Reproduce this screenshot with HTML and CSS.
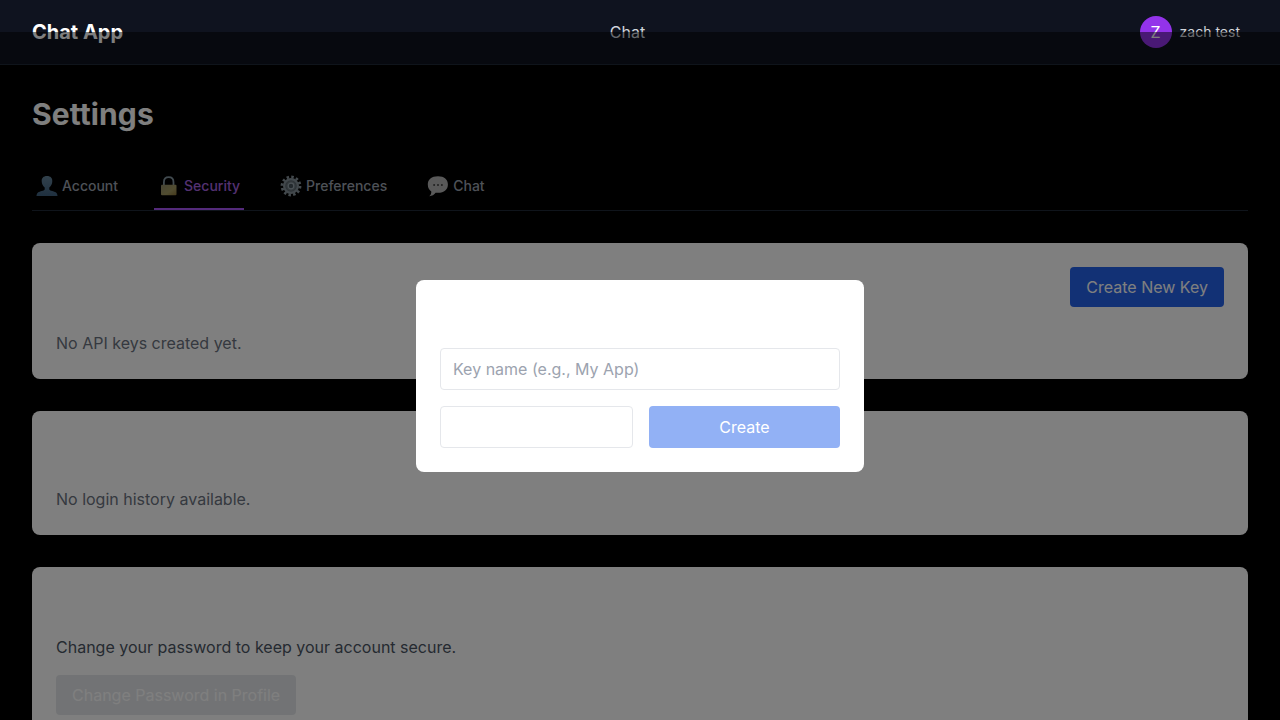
FILE: index.html
```html
<!DOCTYPE html>
<html lang="en">
<head>
<meta charset="utf-8">
<title>Chat App</title>
<link rel="stylesheet" href="styles.css">
</head>
<body>
<header class="topbar">
  <div class="brand">Chat App</div>
  <nav class="nav">Chat</nav>
  <div class="user"><span class="avatar">Z</span><span class="username">zach test</span></div>
</header>
<main class="page">
  <h1 class="title">Settings</h1>
  <div class="tabs">
    <div class="tab">
      <svg class="icon" viewBox="0 0 22 22"><defs><linearGradient id="person" x1="0" y1="0" x2="0" y2="1"><stop offset="0" stop-color="#648298"/><stop offset="1" stop-color="#3f6180"/></linearGradient></defs><path fill="url(#person)" d="M11 1C7.400 1 5.500 3.200 5.700 6.200c.1 2.600 1.100 4.900 3 6.200v2c-.7 1.500-4.700 1.400-6.700 3.200C.9 18.600.5 20 .5 21h21c0-1-.4-2.400-1.500-3.400-2-1.800-6-1.700-6.700-3.200v-2c1.900-1.300 2.900-3.600 3-6.200C16.500 3.200 14.600 1 11 1z"/></svg>
      <span>Account</span>
    </div>
    <div class="tab tab-active">
      <svg class="icon" viewBox="0 0 22 22"><defs><linearGradient id="lock" x1="0" y1="0" x2="1" y2="1"><stop offset="0" stop-color="#8f8a68"/><stop offset=".6" stop-color="#a39a62"/><stop offset="1" stop-color="#8a7438"/></linearGradient></defs><path fill="none" stroke="#82949e" stroke-width="1.800" d="M5.900 11V7.200C5.900 4 8 2.200 10.700 2.200s4.800 1.800 4.800 5V11"/><rect x="3" y="9.800" width="15.500" height="10.500" rx="1" fill="url(#lock)"/></svg>
      <span>Security</span>
    </div>
    <div class="tab">
      <svg class="icon" viewBox="0 0 22 22"><circle cx="11" cy="11" r="9" fill="none" stroke="#87939a" stroke-width="2.800" stroke-dasharray="2.450 2.262"/><circle cx="11" cy="11" r="6.900" fill="#5b666d" stroke="#849098" stroke-width="2.200"/><circle cx="11" cy="11" r="4.700" fill="#69757c"/><circle cx="11" cy="11" r="2.800" fill="#46535a" stroke="#98a5ad" stroke-width="1.200"/></svg>
      <span>Preferences</span>
    </div>
    <div class="tab">
      <svg class="icon" viewBox="0 0 22 22"><path fill="#b3b3b3" d="M11 1.200C4.500 1.200.8 4.300.8 9.500c0 3.500 1.500 5.700 3.500 7 .1 2-.6 3.600-2 4.700 2.700-.1 5-1.400 6.300-3.400h2.400c6.200 0 9.900-3.200 9.900-8.300S17.200 1.200 11 1.200z"/><g fill="#404040"><circle cx="7.100" cy="10" r="1"/><circle cx="11" cy="10" r="1"/><circle cx="14.900" cy="10" r="1"/></g></svg>
      <span>Chat</span>
    </div>
  </div>
  <section class="card">
    <div class="card-head"><button class="btn btn-primary">Create New Key</button></div>
    <p class="empty">No API keys created yet.</p>
  </section>
  <section class="card">
    <div class="card-heading card-heading-wide"></div>
    <p class="empty">No login history available.</p>
  </section>
  <section class="card">
    <div class="card-heading"></div>
    <p class="note">Change your password to keep your account secure.</p>
    <button class="btn btn-disabled">Change Password in Profile</button>
  </section>
</main>
<div class="overlay">
  <div class="modal">
    <div class="card-heading"></div>
    <input class="field" type="text" placeholder="Key name (e.g., My App)">
    <div class="actions">
      <button class="btn btn-outline" aria-label="Dismiss"></button>
      <button class="btn btn-create">Create</button>
    </div>
  </div>
</div>
</body>
</html>
```
FILE: styles.css
```css
* { box-sizing: border-box; }
body {
  margin: 0;
  height: 720px;
  overflow: hidden;
  background: #000;
  font-family: Inter, "Liberation Sans", sans-serif;
  font-size: 16px;
  line-height: 24px;
}
h1, p { margin: 0; }
button, input { font: inherit; }
.topbar {
  display: grid;
  grid-template-columns: 1fr auto 1fr;
  align-items: center;
  height: 65px;
  padding: 0 40px 0 32px;
  background: #0f131f;
  border-bottom: 1px solid #1f2937;
}
.brand { color: #fff; font-size: 20px; font-weight: 700; line-height: 28px; }
.nav { color: #d1d5db; padding-right: 17px; }
.user { display: flex; justify-content: flex-end; align-items: center; gap: 8px; }
.avatar {
  width: 32px;
  height: 32px;
  border-radius: 50%;
  background: #9333ea;
  color: #fff;
  text-align: center;
  line-height: 32px;
}
.username { color: #d1d5db; font-size: 14px; line-height: 20px; }
.page { height: 655px; padding: 32px; overflow: hidden; }
.title {
  color: #fff;
  font-size: 30px;
  font-weight: 700;
  line-height: 34px;
  letter-spacing: .1px;
  font-variant-ligatures: none;
}
.tabs {
  display: flex;
  gap: 32px;
  height: 46px;
  margin: 34px 0 32px;
  border-bottom: 1px solid #1f2937;
}
.tab {
  display: flex;
  align-items: center;
  gap: 4px;
  padding: 0 4px 2px;
  border-bottom: 2px solid transparent;
  color: #9ca3af;
  font-size: 14px;
  font-weight: 500;
}
.tab-active { color: #a863e0; border-bottom-color: #a855f7; }
.icon { width: 22px; height: 22px; flex: none; }
.card {
  margin-bottom: 32px;
  padding: 24px;
  border-radius: 8px;
  background: #fff;
}
.card-head { display: flex; justify-content: flex-end; margin-bottom: 24px; }
.card-heading { height: 28px; margin-bottom: 16px; }
.card-heading-wide { margin-bottom: 24px; }
.empty { color: #6b7280; }
.note { margin-bottom: 16px; color: #4b5563; }
.btn {
  display: block;
  height: 40px;
  padding: 8px 16px;
  border: 0;
  border-radius: 4px;
  line-height: 24px;
}
.btn-primary { background: #2563eb; color: #fff; }
.btn-disabled { background: #e5e7eb; color: #fff; }
.overlay {
  position: fixed;
  top: 32px;
  right: 0;
  bottom: 0;
  left: 0;
  display: flex;
  align-items: center;
  justify-content: center;
  background: rgba(0, 0, 0, .5);
}
.modal { width: 448px; padding: 24px; border-radius: 8px; background: #fff; }
.field {
  display: block;
  width: 100%;
  height: 42px;
  margin-bottom: 16px;
  padding: 8px 12px;
  border: 1px solid #e5e7eb;
  border-radius: 4px;
  background: #fff;
}
.field::placeholder { color: #9ca3af; opacity: 1; }
.actions { display: grid; grid-template-columns: 193px 191px; gap: 16px; }
.actions .btn { height: 42px; }
.btn-outline { border: 1px solid #e5e7eb; background: #fff; }
.btn-create { background: #92b1f5; color: #fff; }
```
